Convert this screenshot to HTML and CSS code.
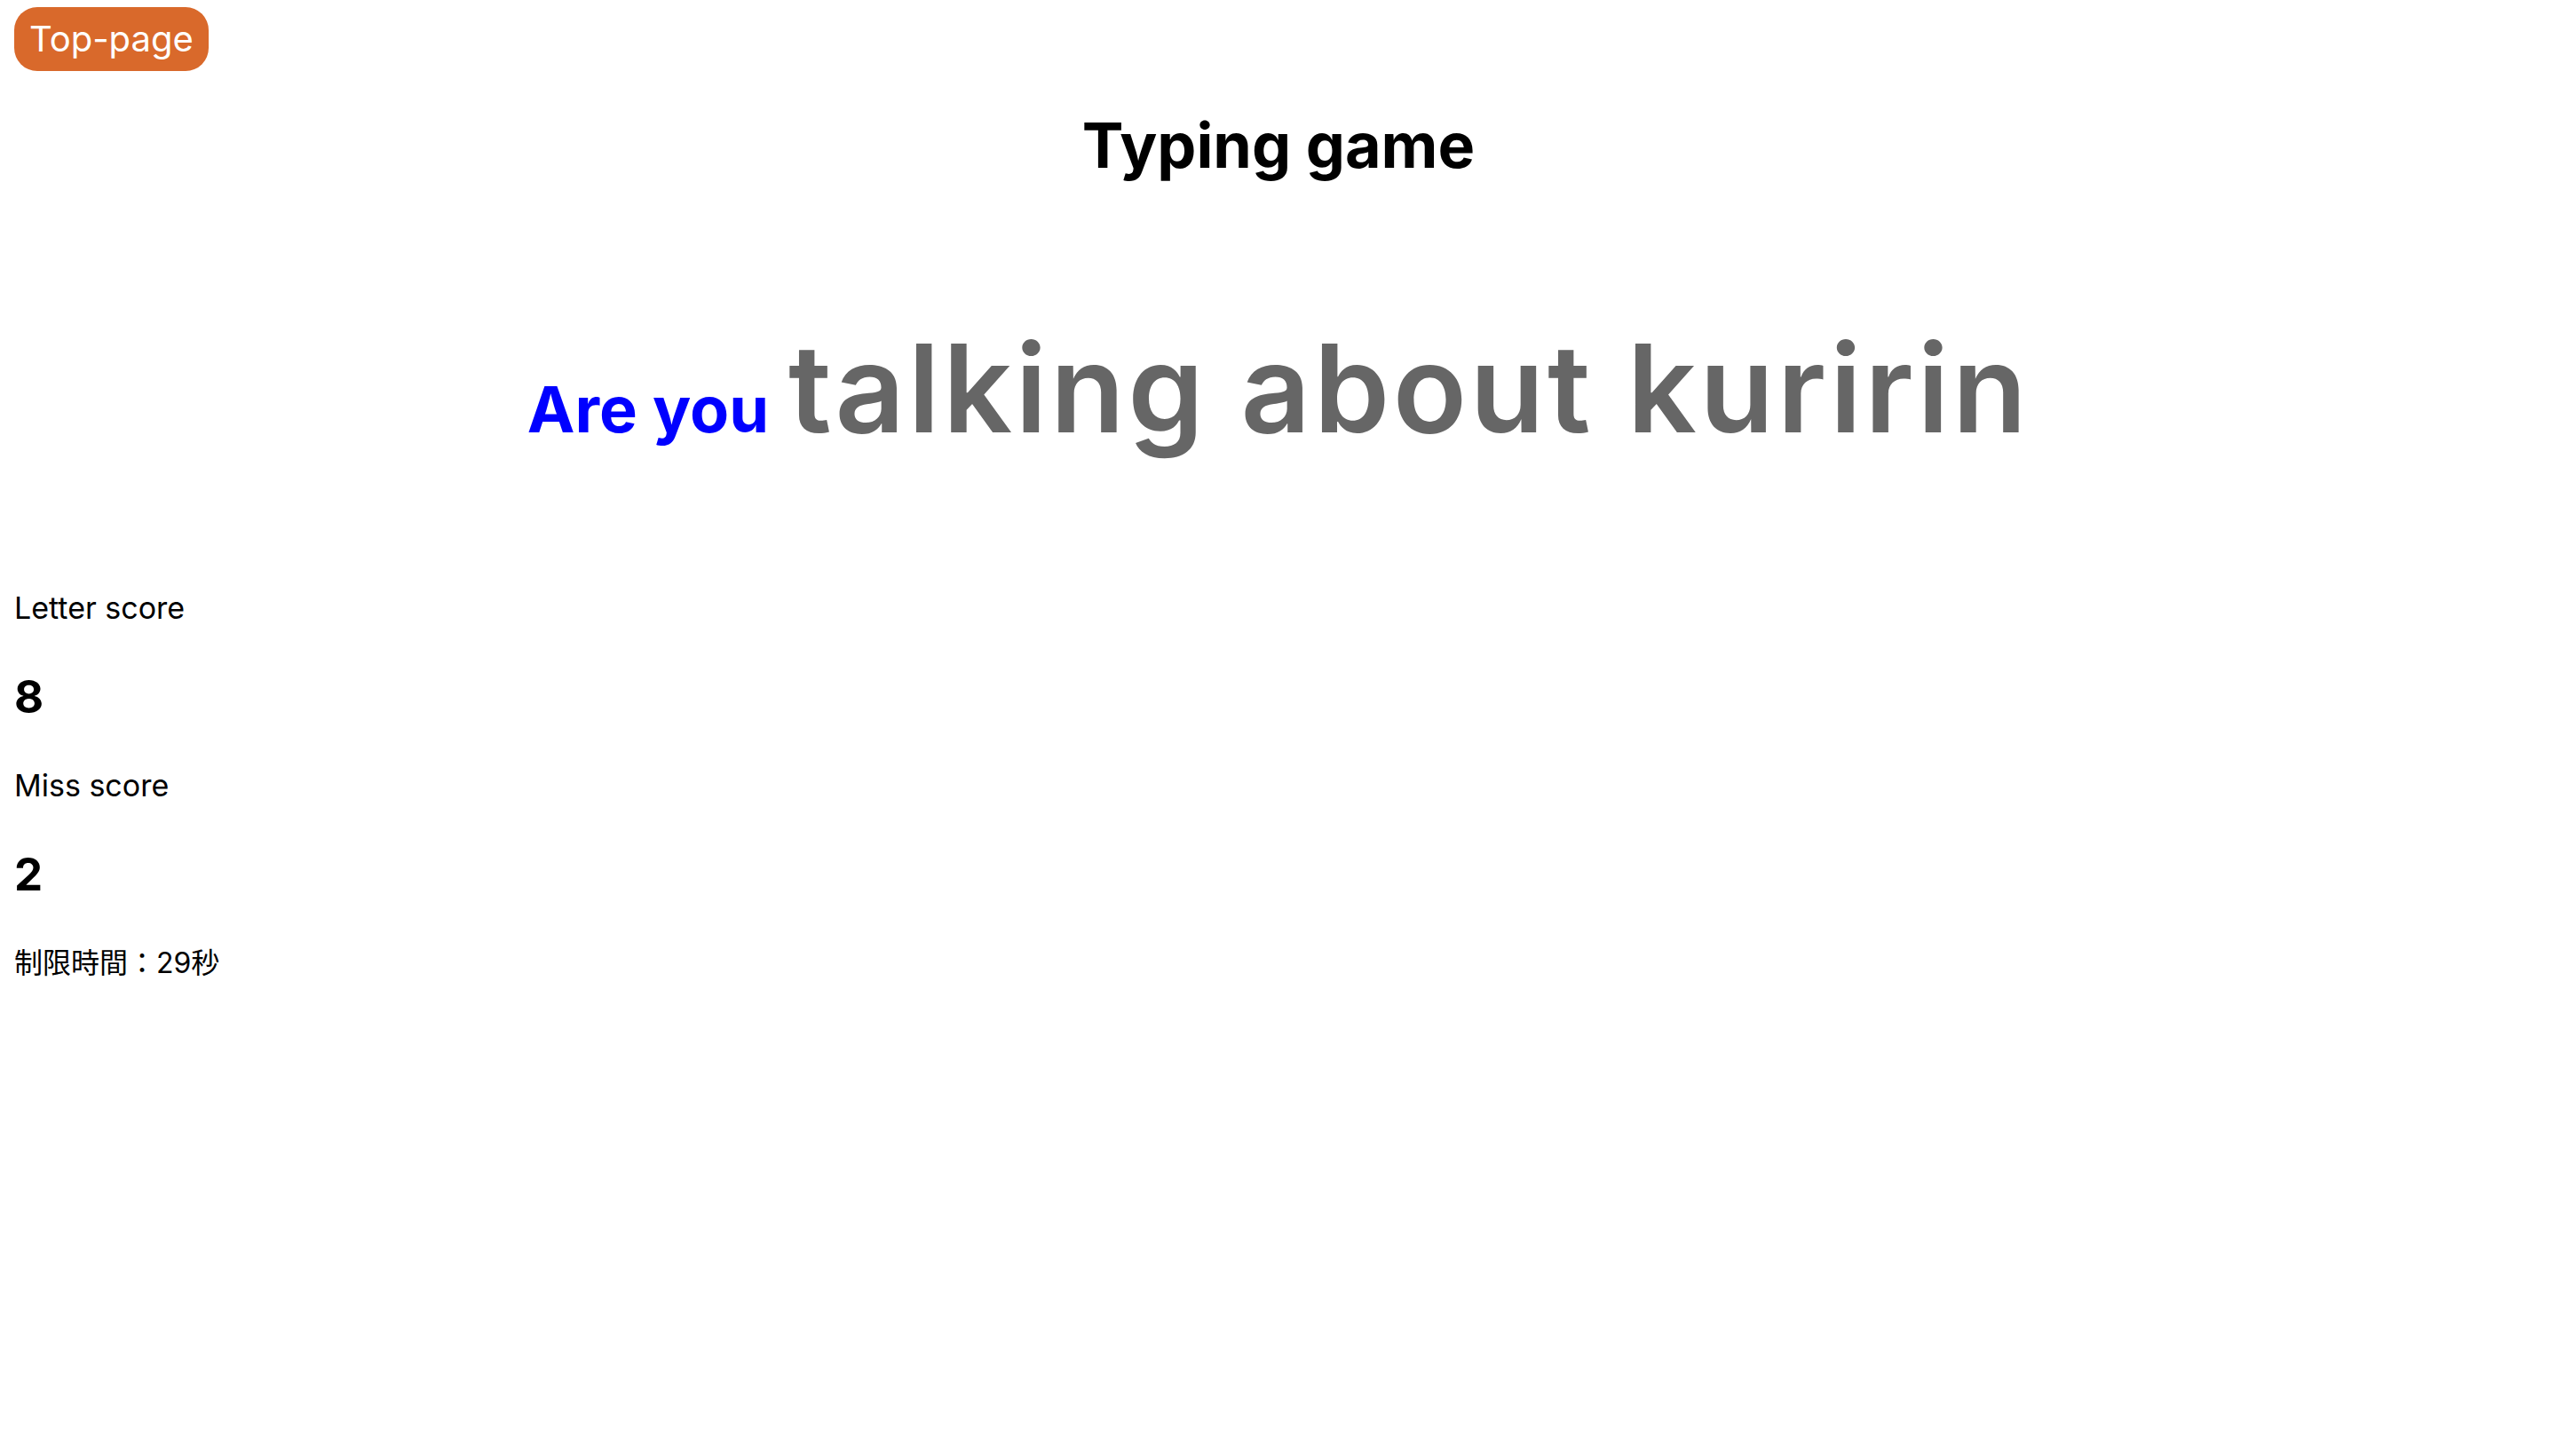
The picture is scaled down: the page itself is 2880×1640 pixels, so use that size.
FILE: index.html
```html
<!DOCTYPE html>
<html lang="ja">
<head>
<meta charset="utf-8">
<title>Typing game</title>
<link rel="stylesheet" href="styles.css">
</head>
<body>
<div class="page">
  <a class="top-btn" href="#">Top-page</a>
  <h1 class="title">Typing game</h1>
  <div class="typing">
    <span class="typed">Are you</span>
    <span class="untyped">talking about kuririn</span>
  </div>
  <section class="scores">
    <p class="label">Letter score</p>
    <h2 class="value">8</h2>
    <p class="label">Miss score</p>
    <h2 class="value">2</h2>
    <p class="label label-jp">制限時間：29秒</p>
  </section>
</div>
</body>
</html>
```
FILE: styles.css
```css
html, body {
  margin: 0;
  padding: 0;
  background: #ffffff;
}
body {
  font-family: Inter, "Noto Sans CJK JP", sans-serif;
  color: #000000;
}
.page {
  padding: 8px 16px;
  display: flex;
  flex-direction: column;
  align-items: flex-start;
}
.top-btn {
  display: inline-flex;
  align-items: center;
  height: 72px;
  padding: 0 17px;
  border-radius: 26px;
  background: #d9692b;
  color: #ffffff;
  text-decoration: none;
  font-size: 40px;
  line-height: 1;
  font-weight: 400;
}
.title {
  align-self: stretch;
  margin: 31px 0 0;
  text-align: center;
  font-size: 70px;
  line-height: 105px;
  font-weight: 700;
}
.typing {
  align-self: stretch;
  margin-top: 153px;
  display: flex;
  justify-content: center;
  align-items: baseline;
  gap: 22px;
  font-weight: 700;
  line-height: 1;
}
.typed {
  color: #0000ff;
  font-size: 72px;
}
.untyped {
  color: #666666;
  font-size: 137px;
  font-weight: 600;
  letter-spacing: 3.5px;
}
.scores {
  margin-top: 155px;
  display: flex;
  flex-direction: column;
  gap: 40px;
}
.label {
  margin: 0;
  font-size: 34px;
  line-height: 48px;
  font-weight: 400;
}
.label-jp {
  font-size: 32px;
}
.value {
  margin: 0;
  font-size: 51px;
  line-height: 72px;
  font-weight: 700;
}
```
